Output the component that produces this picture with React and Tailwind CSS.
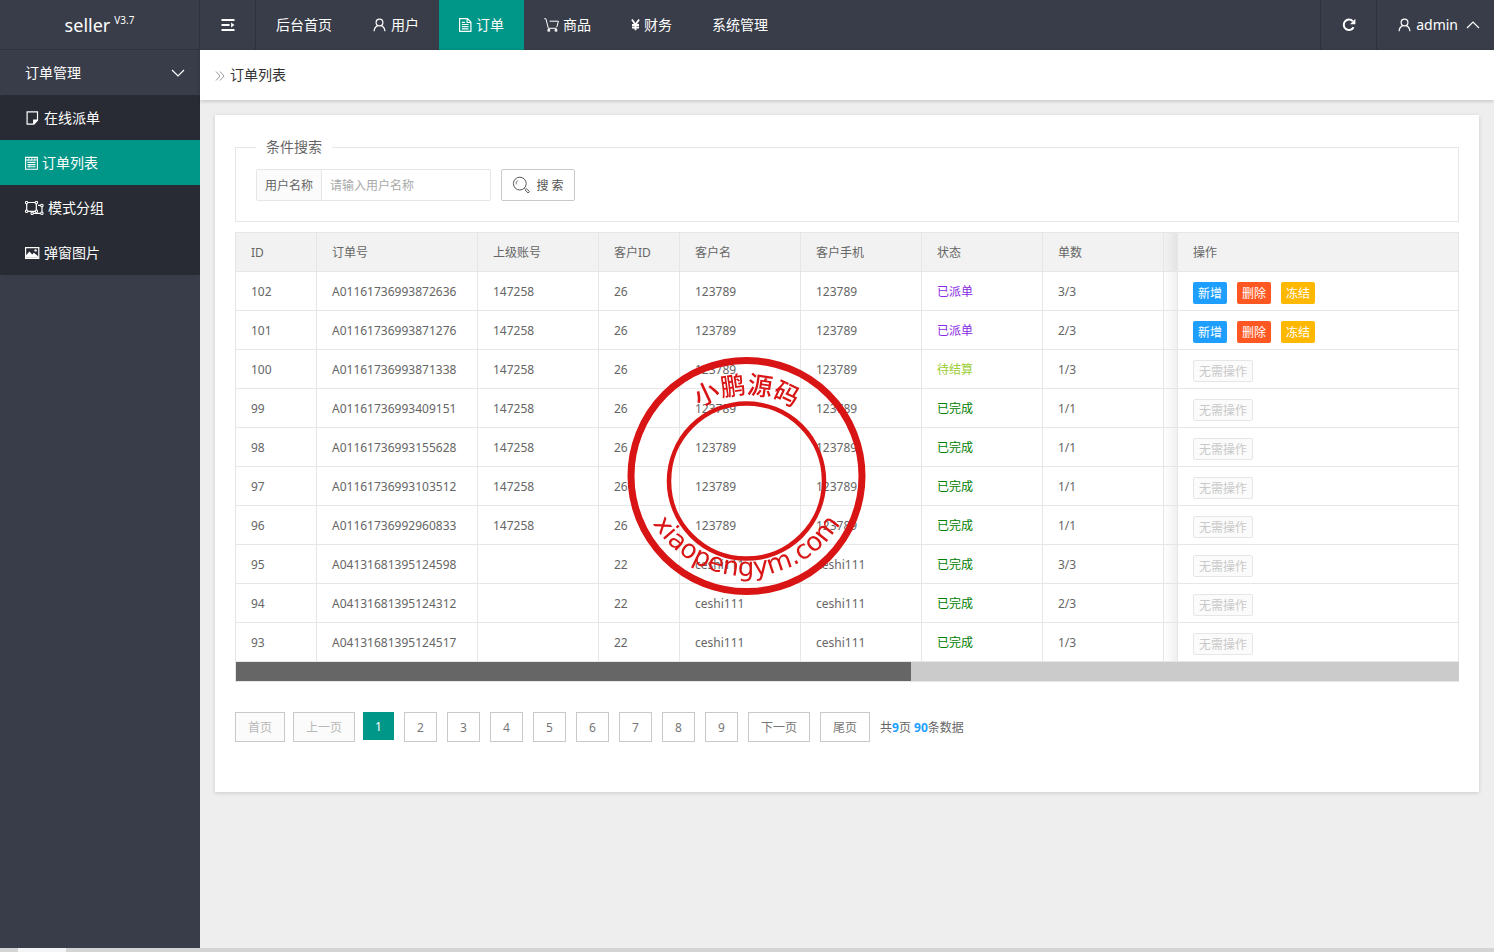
const navItems = [
  { label: '后台首页' },
  { label: '用户', icon: UserIcon },
  { label: '订单', icon: FileIcon, active: true },
  { label: '商品', icon: CartIcon },
  { label: '财务', icon: YenIcon },
  { label: '系统管理' },
]

const menuItems = [
  { label: '在线派单', icon: NoteIcon },
  { label: '订单列表', icon: FormIcon, active: true },
  { label: '模式分组', icon: GroupIcon },
  { label: '弹窗图片', icon: PictureIcon },
]

const statusColors = {
  已派单: 'text-[#8a2be2]',
  待结算: 'text-[#9acd32]',
  已完成: 'text-[#008000]',
}

const orders = [
  { id: 102, no: 'A01161736993872636', parent: '147258', cid: 26, name: '123789', phone: '123789', status: '已派单', count: '3/3' },
  { id: 101, no: 'A01161736993871276', parent: '147258', cid: 26, name: '123789', phone: '123789', status: '已派单', count: '2/3' },
  { id: 100, no: 'A01161736993871338', parent: '147258', cid: 26, name: '123789', phone: '123789', status: '待结算', count: '1/3' },
  { id: 99, no: 'A01161736993409151', parent: '147258', cid: 26, name: '123789', phone: '123789', status: '已完成', count: '1/1' },
  { id: 98, no: 'A01161736993155628', parent: '147258', cid: 26, name: '123789', phone: '123789', status: '已完成', count: '1/1' },
  { id: 97, no: 'A01161736993103512', parent: '147258', cid: 26, name: '123789', phone: '123789', status: '已完成', count: '1/1' },
  { id: 96, no: 'A01161736992960833', parent: '147258', cid: 26, name: '123789', phone: '123789', status: '已完成', count: '1/1' },
  { id: 95, no: 'A04131681395124598', parent: '', cid: 22, name: 'ceshi111', phone: 'ceshi111', status: '已完成', count: '3/3' },
  { id: 94, no: 'A04131681395124312', parent: '', cid: 22, name: 'ceshi111', phone: 'ceshi111', status: '已完成', count: '2/3' },
  { id: 93, no: 'A04131681395124517', parent: '', cid: 22, name: 'ceshi111', phone: 'ceshi111', status: '已完成', count: '1/3' },
]

const columns = [
  { title: 'ID', width: 'w-[81px]' },
  { title: '订单号', width: 'w-[161px]' },
  { title: '上级账号', width: 'w-[121px]' },
  { title: '客户ID', width: 'w-[81px]' },
  { title: '客户名', width: 'w-[121px]' },
  { title: '客户手机', width: 'w-[121px]' },
  { title: '状态', width: 'w-[121px]' },
  { title: '单数', width: 'w-[121px]' },
]

function Icon({ children, className = 'size-3.5', viewBox = '0 0 14 14' }) {
  return (
    <svg
      className={`shrink-0 ${className}`}
      viewBox={viewBox}
      fill="none"
      stroke="currentColor"
      strokeWidth="1.2"
      aria-hidden="true"
    >
      {children}
    </svg>
  )
}

function UserIcon() {
  return (
    <Icon className="h-3.5 w-[15px]">
      <circle cx="7" cy="4.5" r="3.4" />
      <path d="M1.6 13.2c.2-3 1.7-4.8 3.7-5.6M12.4 13.2c-.2-3-1.7-4.8-3.7-5.6" />
    </Icon>
  )
}

function FileIcon() {
  return (
    <Icon className="h-3.5 w-[13px]" viewBox="0.5 0 13 14">
      <path d="M1.1.6h7.8l3.5 3.6v9.2H1.1zM8.6.8v3.7h3.6M3.4 6.5h6.6M3.4 8.7h6.6M3.4 10.9h6.6M3.4 4.3h3" />
    </Icon>
  )
}

function CartIcon() {
  return (
    <Icon className="h-3.5 w-[15px]" viewBox="0 0 15 14">
      <path d="M.3.7h1.6l2.4 9.6h8.2M5.6 3.2h8.8l-1.6 6" strokeWidth="1" />
      <circle cx="4.8" cy="12.3" r=".9" />
      <circle cx="12" cy="12.3" r=".9" />
    </Icon>
  )
}

function YenIcon() {
  return (
    <Icon className="h-3.5 w-[9px]" viewBox="0.5 0 9 14">
      <path d="M1.4 1.5 5 6.6l3.6-5.1M5 6.4v5.8M1.5 7h7M1.5 9.5h7" strokeWidth="1.8" />
    </Icon>
  )
}

function NoteIcon() {
  return (
    <Icon className="h-3.5 w-[15px]">
      <path d="M1.6.9H12v8.3l-3.6 4H1.6zM11.9 9H8.2v4" />
      <path d="M8.2 9h3.7l-3.7 4z" fill="currentColor" stroke="none" />
    </Icon>
  )
}

function FormIcon() {
  return (
    <Icon className="h-3.5 w-[13px]" viewBox="0 0 13 14">
      <path d="M.6 1.4h11.8v11.8H.6zM1 4h11M2.5 6.4h8M2.5 8.6h8M2.5 10.8h8" strokeWidth="1.1" />
      <path d="M3.8 1.4v2.2l-1 1.2M6.8 1.4v2.2l-1 1.2M9.8 1.4v2.2l-1 1.2M4.3 8v3.4" strokeWidth=".8" />
    </Icon>
  )
}

function GroupIcon() {
  return (
    <Icon className="h-3.5 w-[19px]" viewBox="0 0 19 14">
      <path d="M1.7 1.5h9.6v8.8H1.7zM13 4.4h4v8H7.3V10" />
      <g fill="#282b33" strokeWidth="1">
        <path d="M.5.5h2.2v2.2H.5zM10.3.5h2.2v2.2h-2.2zM.5 9.2h2.2v2.2H.5zM10.3 9.2h2.2v2.2h-2.2zM15.8 3.4H18v2.2h-2.2zM15.8 11.2H18v2.2h-2.2zM6 11.2h2.2v2.2H6z" />
      </g>
    </Icon>
  )
}

function PictureIcon() {
  return (
    <Icon className="h-3.5 w-[15px]" viewBox="0 0 15 14">
      <path d="M.6 1.6h13.2v10.8H.6z" />
      <path d="M1 11.8V9.6l3.4-4 2.8 3 1.7-1.8 4.5 3.6v1.4z" fill="currentColor" stroke="none" />
      <circle cx="10.6" cy="4.4" r="1.2" fill="currentColor" stroke="none" />
    </Icon>
  )
}

function Stamp() {
  return (
    <div className="pointer-events-none fixed inset-0 flex items-center justify-center">
      <svg
        className="size-60 text-[#d91414]"
        viewBox="0 0 240 240"
        fill="none"
        stroke="currentColor"
        aria-hidden="true"
      >
        <defs>
          <path id="stamp-top" d="M33.5 124a86 86 0 0 1 172 0" />
          <path id="stamp-bottom" d="M9.5 110a110 110 0 0 0 220 0" />
        </defs>
        <circle cx="119.5" cy="120" r="115.5" strokeWidth="7" />
        <circle cx="119.5" cy="125" r="77.5" strokeWidth="4.5" />
        <g fill="currentColor" stroke="none" textAnchor="middle">
          <text fontSize="25" className="font-medium">
            <textPath href="#stamp-top" startOffset="50%">小鹏源码</textPath>
          </text>
          <text fontSize="26" className="font-['DejaVu_Sans',sans-serif]">
            <textPath href="#stamp-bottom" startOffset="50%">xiaopengym.com</textPath>
          </text>
        </g>
      </svg>
    </div>
  )
}

function Header() {
  return (
    <header className="flex h-[50px] bg-[#393d49] text-sm text-white">
      <a
        href="#home"
        className="flex w-[200px] items-center justify-center gap-1 border-r border-b border-[#2f323c] text-lg"
      >
        seller <sup className="text-[10px]">V3.7</sup>
      </a>
      <button type="button" aria-label="菜单" className="flex w-14 items-center justify-center border-r border-[#2f323c]">
        <Icon>
          <path d="M.5 2h13M.5 7h8M.5 12h13" strokeWidth="1.8" />
          <path d="m13.5 7-3.4-2.6v5.2z" fill="currentColor" stroke="none" />
        </Icon>
      </button>
      <nav className="flex">
        {navItems.map(({ label, icon: ItemIcon, active }) => (
          <a
            key={label}
            href="#nav"
            className={`flex items-center gap-1 px-5 whitespace-nowrap ${active ? 'bg-[#009688]' : ''}`}
          >
            {ItemIcon && <ItemIcon />}
            {label}
          </a>
        ))}
      </nav>
      <div className="ml-auto flex">
        <button type="button" aria-label="刷新" className="flex w-[57px] items-center justify-center border-x border-[#2f323c]">
          <Icon>
            <path d="M11.6 9.2A5.2 5.2 0 1 1 10.8 3.3" strokeWidth="2" />
            <path d="M13.4.8v5.4H8z" fill="currentColor" stroke="none" />
          </Icon>
        </button>
        <button type="button" className="flex items-center gap-1 pr-3.5 pl-5">
          <UserIcon />
          admin
          <Icon className="ml-1 size-3.5">
            <path d="m1 10 6-6 6 6" />
          </Icon>
        </button>
      </div>
    </header>
  )
}

function Sidebar() {
  return (
    <aside className="w-[200px] shrink-0 bg-[#393d49] text-sm text-white">
      <button type="button" className="flex h-[45px] w-full items-center justify-between pr-[15px] pl-[25px]">
        订单管理
        <Icon>
          <path d="m1 4 6 6 6-6" />
        </Icon>
      </button>
      <ul className="rounded-xs bg-[#282b33]">
        {menuItems.map(({ label, icon: ItemIcon, active }) => (
          <li key={label}>
            <a
              href="#menu"
              className={`flex h-[45px] items-center gap-1 pl-[25px] ${active ? 'bg-[#009688]' : ''}`}
            >
              <ItemIcon />
              {label}
            </a>
          </li>
        ))}
      </ul>
    </aside>
  )
}

function SearchForm() {
  return (
    <form>
      <fieldset className="border border-[#e6e6e6] px-5 pt-2.5 pb-5">
        <legend className="px-2.5 text-sm leading-6">条件搜索</legend>
        <div className="flex gap-2.5 text-xs">
          <div className="flex h-8 w-[235px] rounded-xs border border-[#e6e6e6]">
            <label htmlFor="username" className="flex items-center border-r border-[#e6e6e6] bg-[#fbfbfb] px-2 pt-0.5 whitespace-nowrap">
              用户名称
            </label>
            <input
              id="username"
              type="text"
              placeholder="请输入用户名称"
              className="w-full min-w-0 px-2 pt-0.5 outline-none placeholder:text-[#a9a9a9]"
            />
          </div>
          <button type="button" className="flex h-8 w-[74px] items-center justify-center gap-1.5 rounded-xs border border-[#c9c9c9] whitespace-nowrap text-[#555]">
            <Icon className="size-[18px]" viewBox="0 0 18 18">
              <circle cx="7.8" cy="7.6" r="6.4" strokeWidth="1" />
              <path d="M4.2 8.4a3.8 3.8 0 0 1 1.6-4" strokeWidth=".8" />
              <path d="m12.4 12.2 1 1m-.2.9 1.3-1.3 3 2.8-1.4 1.4z" strokeWidth="1" />
            </Icon>
            <span className="pt-0.5">搜 索</span>
          </button>
        </div>
      </fieldset>
    </form>
  )
}

function RowActions({ status }) {
  if (status !== '已派单') {
    return (
      <button type="button" disabled className="h-[22px] rounded-xs border border-[#e6e6e6] bg-[#fbfbfb] px-[5px] pt-0.5 text-[#c9c9c9]">
        无需操作
      </button>
    )
  }
  return (
    <div className="flex gap-2.5 text-white">
      <button type="button" className="h-[22px] rounded-xs bg-[#1e9fff] px-[5px] pt-0.5">新增</button>
      <button type="button" className="h-[22px] rounded-xs bg-[#ff5722] px-[5px] pt-0.5">删除</button>
      <button type="button" className="h-[22px] rounded-xs bg-[#ffb800] px-[5px] pt-0.5">冻结</button>
    </div>
  )
}

function OrderTable() {
  const cell = 'h-[39px] border-r border-b border-[#e6e6e6] px-[15px] pt-0.5'
  const edge = 'border-r border-b border-[#e6e6e6] bg-linear-to-l from-black/6 to-transparent'

  return (
    <div className="mt-2.5 border border-r-0 border-[#e6e6e6] text-xs">
      <table className="w-full table-fixed border-separate border-spacing-0">
        <thead className="bg-[#f2f2f2] text-left">
          <tr>
            {columns.map((col) => (
              <th key={col.title} className={`${cell} ${col.width} font-normal`}>{col.title}</th>
            ))}
            <td className={edge} />
            <th className={`${cell} w-[281px] font-normal`}>操作</th>
          </tr>
        </thead>
        <tbody>
          {orders.map((order) => (
            <tr key={order.id}>
              <td className={cell}>{order.id}</td>
              <td className={cell}>{order.no}</td>
              <td className={cell}>{order.parent}</td>
              <td className={cell}>{order.cid}</td>
              <td className={cell}>{order.name}</td>
              <td className={cell}>{order.phone}</td>
              <td className={`${cell} ${statusColors[order.status]}`}>{order.status}</td>
              <td className={cell}>{order.count}</td>
              <td className={edge} />
              <td className="border-r border-b border-[#e6e6e6] px-[15px] pt-1">
                <RowActions status={order.status} />
              </td>
            </tr>
          ))}
        </tbody>
      </table>
      <div className="h-[19px] bg-[#cbcbcb]">
        <div className="h-full w-[55.2%] bg-[#666]" />
      </div>
    </div>
  )
}

function Pagination() {
  const button = 'h-[30px] min-w-[33px] border border-[#c9c9c9] px-3 pt-0.5 text-[#777]'
  const disabledButton = 'h-[30px] border border-[#c9c9c9] bg-[#fbfbfb] px-3 pt-0.5 text-[#b8b8b8]'

  return (
    <nav className="mt-[30px] flex flex-wrap gap-2.5 text-xs" aria-label="分页">
      <div className="flex gap-2">
        <button type="button" disabled className={disabledButton}>首页</button>
        <button type="button" disabled className={disabledButton}>上一页</button>
        <button type="button" aria-current="page" className="h-7 min-w-[31px] bg-[#009688] px-3 pt-0.5 text-white">1</button>
      </div>
      {[2, 3, 4, 5, 6, 7, 8, 9].map((page) => (
        <button key={page} type="button" className={button}>{page}</button>
      ))}
      <button type="button" className={button}>下一页</button>
      <button type="button" className={button}>尾页</button>
      <p className="pt-2 leading-4">
        共<b className="text-[#1e9fff]">9</b>页 <b className="text-[#1e9fff]">90</b>条数据
      </p>
    </nav>
  )
}

const App = () => {
  return (
    <div className="flex min-h-screen flex-col bg-[#eee] font-['Noto_Sans','Noto_Sans_CJK_SC',sans-serif] text-[#666]">
      <Header />
      <div className="flex flex-1">
        <Sidebar />
        <main className="min-w-0 flex-1">
          <div className="flex h-[50px] items-center gap-1 bg-white px-[15px] text-sm text-[#333] shadow-[0_1px_4px_rgba(0,0,0,0.2)]">
            <Icon className="size-[11px] text-[#999]" viewBox="0 0 11 11">
              <path d="m1 1.5 4 4.5-4 4.5M5 1.5 9 6l-4 4.5" strokeWidth="1" />
            </Icon>
            <h1>订单列表</h1>
          </div>
          <section className="m-[15px] bg-white px-5 pt-5 pb-[50px] shadow-[0_1px_4px_rgba(0,0,0,0.15)]">
            <SearchForm />
            <OrderTable />
            <Pagination />
          </section>
        </main>
      </div>
      <footer className="flex h-1 bg-[#d4d4d4] pl-[18px]">
        <div className="w-12 bg-[#f4f4f6]" />
      </footer>
      <Stamp />
    </div>
  )
}

export default App
